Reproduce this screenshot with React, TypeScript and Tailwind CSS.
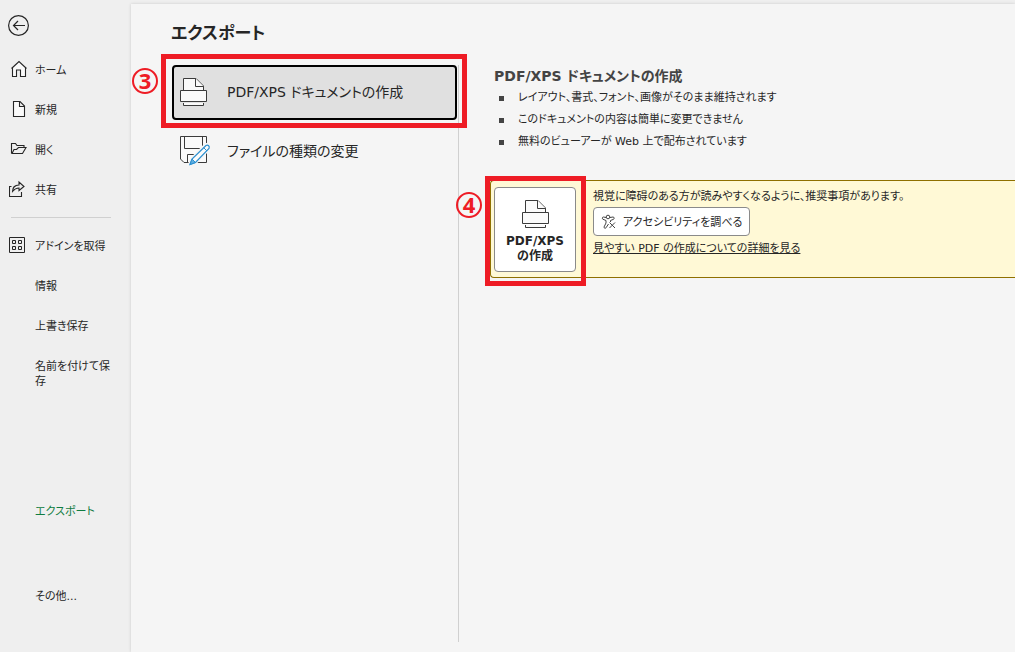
import type { ReactNode } from "react";

const navTop = [
  { label: "ホーム", icon: <HomeIcon /> },
  { label: "新規", icon: <PageIcon /> },
  { label: "開く", icon: <FolderIcon /> },
  { label: "共有", icon: <ShareIcon /> },
];

const navMiddle = [
  { label: "アドインを取得", icon: <AddinIcon /> },
  { label: "情報" },
  { label: "上書き保存" },
  { label: "名前を付けて保存" },
];

const features = [
  "レイアウト、書式、フォント、画像がそのまま維持されます",
  "このドキュメントの内容は簡単に変更できません",
  "無料のビューアーが Web 上で配布されています",
];

function BackIcon() {
  return (
    <svg width="22" height="22" viewBox="0 0 22 22" fill="none" stroke="#262626" strokeWidth="1.2">
      <circle cx="10.5" cy="10.5" r="9.9" />
      <path d="M17 10.5H5.5M10 6L5.5 10.5l4.5 4.5" />
    </svg>
  );
}

function HomeIcon() {
  return (
    <svg width="18" height="18" viewBox="0 0 18 18" fill="#fafafa" stroke="#262626" strokeWidth="1.1">
      <path d="M3.500 7.500v9h4v-6.500h4v6.500h5v-9L10 1.500z" stroke="none" />
      <path d="M2.500 8.500L10 1.500l7.500 7M3.500 7.500v9h4v-6.500h4v6.500h5v-9" fill="none" />
    </svg>
  );
}

function PageIcon() {
  return (
    <svg width="18" height="18" viewBox="0 0 18 18" fill="#fafafa" stroke="#262626" strokeWidth="1.1">
      <path d="M4.500 1.500h6.500l4.500 4.500v10.500h-11zM10.500 1.500v5h5" />
    </svg>
  );
}

function FolderIcon() {
  return (
    <svg width="18" height="18" viewBox="0 0 18 18" fill="none" stroke="#262626" strokeWidth="1.1">
      <path d="M2.500 13.500v-10h4l1.500 2h7v2M2.500 13.500h11l3.500-6h-7.500l-2 2h-2.500l-2 4" />
    </svg>
  );
}

function ShareIcon() {
  return (
    <svg width="18" height="18" viewBox="0 0 18 18" fill="none" stroke="#262626" strokeWidth="1.1">
      <path d="M2.500 6.500H.5v10h12v-4.500" />
      <path d="M3.500 11.500c0-4 2.500-6.500 6.500-6.500V2l5 4.500-5 4V8C7.500 8 5.500 9 3.500 11.500z" />
    </svg>
  );
}

function AddinIcon() {
  return (
    <svg width="18" height="18" viewBox="0 0 18 18" fill="none" stroke="#262626">
      <path d="M.5 1.500h15v15H.5z" />
      <path d="M3.500 4.500h3v3h-3zM9.500 4.500h3v3h-3zM3.500 10.500h3v3h-3zM9.500 10.500h3v3h-3z" />
    </svg>
  );
}

function PrinterIcon() {
  return (
    <svg width="27" height="28" viewBox="0 0 27 28" fill="#fafafa" stroke="#3b3b3b">
      <path d="M3.500 12.500V.5h12.500L23.500 8v4.500" />
      <path d="M15.500 .5v8h8" />
      <path d="M.5 12.500h26v11H.5z" />
      <path d="M3.500 25v2.500h20V25" />
    </svg>
  );
}

function SaveAsIcon() {
  return (
    <svg width="31" height="30" viewBox="0 0 31 30" fill="none">
      <path d="M.5 .5h26v26H4l-3.500-3.500z" fill="#fafafa" stroke="#3b3b3b" />
      <path d="M4.500 .5v12h18V.5M7.500 26V18.500h10" stroke="#3b3b3b" />
      <path d="M10 28.500l2-5.500L26 9c2.500-1 4 1 3 3L15.500 26z" fill="#fafafa" stroke="#f5f5f5" strokeWidth="4" />
      <path d="M10 28.500l2-5.500L26 9.500c2-1 4 .5 3 3L15.500 26.500z" fill="#fafafa" stroke="#2b8fd0" strokeWidth="1.200" />
      <path d="M10 28.500l2-5.500 3.500 3.500z" fill="#5eaee0" stroke="#2b8fd0" />
      <path d="M23.500 11.500l3.500 3.500" stroke="#2b8fd0" />
    </svg>
  );
}

function AccessibilityIcon() {
  return (
    <svg width="16" height="16" viewBox="0 0 16 16" fill="none" stroke="#444" strokeWidth="1">
      <circle cx="7" cy="3" r="1.800" />
      <path d="M5 3.500L2.500 3C1 3 1 5 2 5.300L5 6.500v2.500L3 13c0 1.500 1.500 1.500 2 .8L7.500 10M9 3.500l3-.5c1.500 0 1.500 2 .5 2.300L9.500 6.500V8" />
      <path d="M8.500 8.500l5.500 5.500M14 8.500L8.500 14" />
    </svg>
  );
}

function NavItem({ label, icon, active = false }: { label: string; icon?: ReactNode; active?: boolean }) {
  return (
    <button
      type="button"
      className={`flex min-h-10 w-full items-start gap-2 pt-[10px] pr-4 pl-[9px] text-left text-[11px] leading-[15px] ${active ? "text-[#107c41]" : "text-[#262626]"}`}
    >
      <span className="w-[18px] shrink-0">{icon}</span>
      <span className="pt-[3px] break-all">{label}</span>
    </button>
  );
}

function Sidebar() {
  return (
    <nav className="flex w-[131px] shrink-0 flex-col">
      <button type="button" aria-label="戻る" className="mt-[15px] mb-[13px] ml-2 w-[22px]">
        <BackIcon />
      </button>
      {navTop.map((item) => (
        <NavItem key={item.label} {...item} />
      ))}
      <hr className="mt-[7px] mr-5 mb-2 ml-[11px] border-[#d0d0d0]" />
      {navMiddle.map((item) => (
        <NavItem key={item.label} {...item} />
      ))}
      <div className="mt-[102px] flex flex-col gap-[45px]">
        <NavItem label="エクスポート" active />
        <NavItem label="その他..." />
      </div>
    </nav>
  );
}

function StepBadge({ step, className }: { step: number; className: string }) {
  return (
    <span
      className={`absolute flex size-[26px] items-center justify-center rounded-full border-2 border-[#ee1c25] pb-0.5 font-['Noto_Sans'] text-[22px] leading-none font-bold text-[#ee1c25] ${className}`}
    >
      {step}
    </span>
  );
}

function ExportList() {
  return (
    <div className="w-[288px] shrink-0 border-r border-[#d0d0d0] px-px">
      <div className="relative">
        <button
          type="button"
          className="flex h-[55px] w-full items-center gap-5 rounded border-2 border-black bg-[#e0e0e0] pb-px pl-[6px] text-left text-sm"
        >
          <PrinterIcon />
          PDF/XPS ドキュメントの作成
        </button>
        <div className="pointer-events-none absolute -top-[11px] -right-[10px] -bottom-2 -left-[11px] border-5 border-[#ee1c25]" />
        <StepBadge step={3} className="top-[3px] -left-10" />
      </div>
      <button type="button" className="flex h-[62px] w-full items-center gap-4 pl-2 text-left text-sm">
        <SaveAsIcon />
        ファイルの種類の変更
      </button>
    </div>
  );
}

function ExportDetail() {
  return (
    <section className="min-w-0 flex-1 pl-[31px]">
      <h2 className="pl-1 text-sm leading-[22px] font-bold text-[#444]">PDF/XPS ドキュメントの作成</h2>
      <ul className="text-[11px] leading-[22px]">
        {features.map((feature) => (
          <li key={feature} className="flex items-center gap-[14px] pl-[9px]">
            <span className="size-[5px] bg-[#444]" />
            {feature}
          </li>
        ))}
      </ul>

      <div className="relative mt-[27px]">
        <div className="flex gap-[17px] rounded-l border border-r-0 border-[#8f7000] bg-[#fff9d6] pt-[6px] pb-[5px] pl-[3px]">
          <button
            type="button"
            className="flex h-[85px] w-[82px] shrink-0 flex-col items-center rounded border border-[#8a8a8a] bg-white pt-3 text-xs leading-[15px] font-bold"
          >
            <PrinterIcon />
            <span className="mt-[6px]">
              PDF/XPS
              <br />
              の作成
            </span>
          </button>
          <div className="flex min-w-0 flex-col items-start text-[11px]">
            <p className="pt-0.5 pb-0.5 leading-4">視覚に障碍のある方が読みやすくなるように、推奨事項があります。</p>
            <button type="button" className="flex h-[29px] items-center gap-[6px] rounded border border-[#8a8a8a] bg-white px-[7px] leading-4">
              <AccessibilityIcon />
              <span className="pt-0.5">アクセシビリティを調べる</span>
            </button>
            <a href="#pdf-help" className="mt-[5px] leading-4 underline">
              見やすい PDF の作成についての詳細を見る
            </a>
          </div>
        </div>
        <div className="pointer-events-none absolute -top-1 -left-[5px] h-[110px] w-[101px] border-5 border-[#ee1c25]" />
        <StepBadge step={4} className="top-3 -left-[34px]" />
      </div>
    </section>
  );
}

export default function App() {
  return (
    <div className="flex min-h-screen bg-[#efefef] font-['DejaVu_Sans','Noto_Sans_CJK_JP',sans-serif] text-[#262626] [font-feature-settings:'palt']">
      <Sidebar />
      <main className="mt-1 flex min-w-0 flex-1 flex-col bg-[#f5f5f5] pb-[10px] pl-10 shadow-[0_0_3px_rgba(0,0,0,0.15)]">
        <h1 className="mt-[15px] mb-[18px] text-[17px] leading-7 font-bold">エクスポート</h1>
        <div className="flex flex-1">
          <ExportList />
          <ExportDetail />
        </div>
      </main>
    </div>
  );
}
